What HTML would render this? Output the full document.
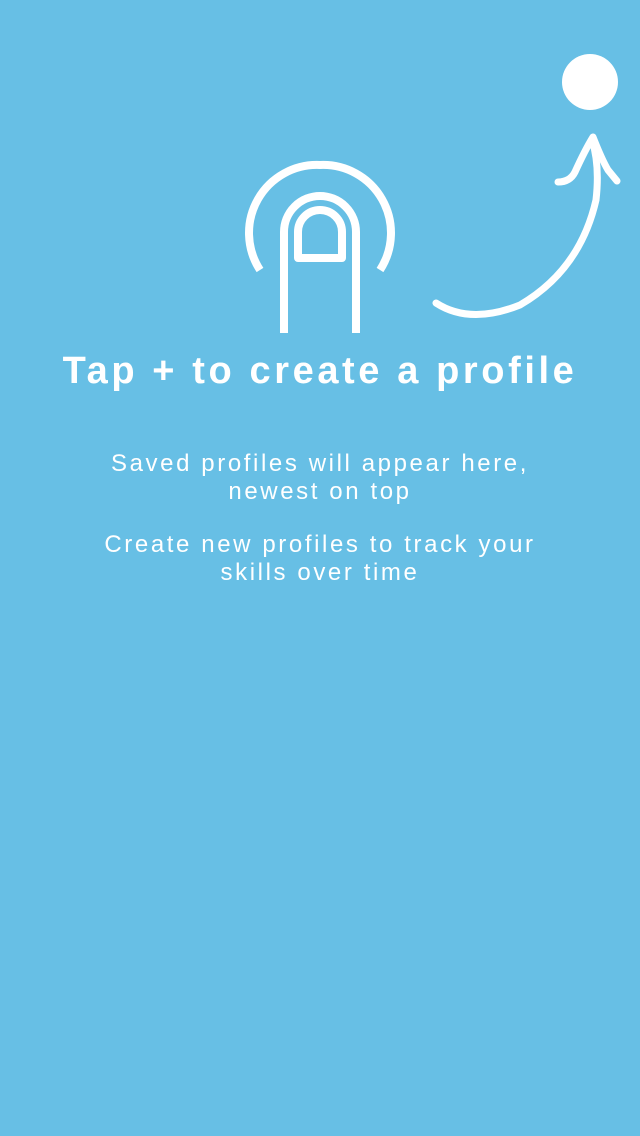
<!DOCTYPE html>
<html><head><style>
html,body{margin:0;padding:0}
body{width:640px;height:1136px;background:#67bfe5;position:relative;overflow:hidden;font-family:"Liberation Sans",sans-serif;color:#fff}
.t{position:absolute;left:0;width:640px;text-align:center;white-space:nowrap}
</style></head><body>
<svg width="640" height="340" style="position:absolute;left:0;top:0" fill="none" stroke="#fff" stroke-linecap="round">
<circle cx="590" cy="82" r="28" fill="#fff" stroke="none"/>
<path d="M260 270 A68 68 0 0 1 320 165 A68 68 0 0 1 380 270" stroke-width="8" stroke-linecap="butt"/>
<path d="M284 333 V232 A36 36 0 0 1 356 232 V333" stroke-width="8" stroke-linecap="butt"/>
<path d="M298 258 V232 A22 22 0 0 1 342 232 V258 Z" stroke-width="8" stroke-linejoin="round"/>
<path d="M436 303 Q470 325 520 305 Q580 270 596 200 Q600 165 592 140" stroke-width="7"/>
<path d="M558 182 Q570 182 575 172 Q585 150 593 137 Q602 160 608 170 L617 181" stroke-width="7" stroke-linejoin="round"/>
</svg>
<div class="t" style="top:350px;font-size:38px;letter-spacing:3.6px;font-weight:bold">Tap + to create a profile</div>
<div class="t" style="top:450px;font-size:24px;line-height:28px;letter-spacing:2.6px">Saved profiles will appear here,<br>newest on top</div>
<div class="t" style="top:531px;font-size:24px;line-height:28px;letter-spacing:2.6px">Create new profiles to track your<br>skills over time</div>
</body></html>
